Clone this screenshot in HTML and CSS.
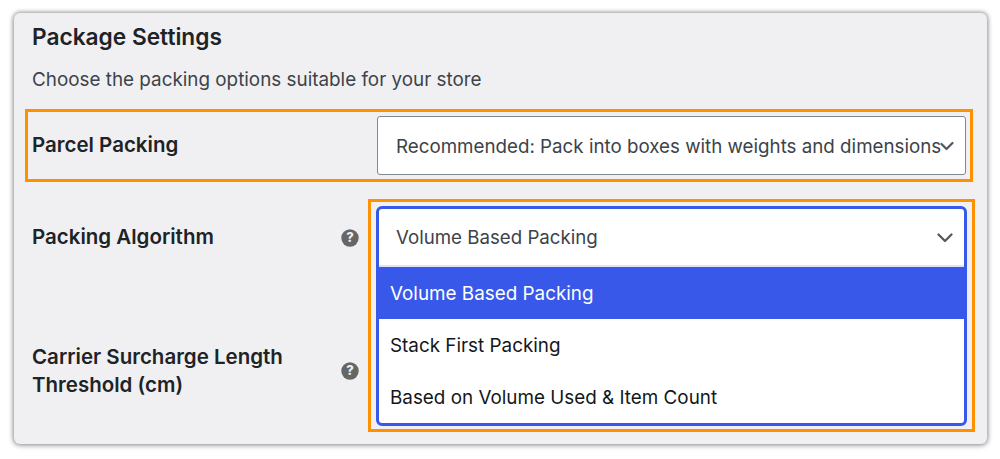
FILE: index.html
```html
<!DOCTYPE html>
<html lang="en">
<head>
<meta charset="utf-8">
<title>Package Settings</title>
<link rel="stylesheet" href="styles.css">
</head>
<body>
<main class="card">
  <h2 class="title">Package Settings</h2>
  <p class="intro">Choose the packing options suitable for your store</p>
  <section class="highlight parcel">
    <div class="label parcel-label">Parcel Packing</div>
    <div class="select">
      <span class="select-text">Recommended: Pack into boxes with weights and dimensions</span>
      <svg class="chev chev-small" viewBox="0 0 14 10"><path d="M1.500 3 6.500 8l6-6"/></svg>
    </div>
  </section>
  <section class="lower">
    <div class="labels">
      <div class="field algo">
        <div class="label">Packing Algorithm</div>
        <svg class="help" viewBox="0 0 18 18"><circle cx="9" cy="9" r="8.700"/><text x="9" y="13.400" text-anchor="middle">?</text></svg>
      </div>
      <div class="field surcharge">
        <div class="label">Carrier Surcharge Length<br>Threshold (cm)</div>
        <svg class="help" viewBox="0 0 18 18"><circle cx="9" cy="9" r="8.700"/><text x="9" y="13.400" text-anchor="middle">?</text></svg>
      </div>
    </div>
    <div class="highlight dropdown-wrap">
      <div class="dropdown">
        <div class="dropdown-head">
          <span>Volume Based Packing</span>
          <svg class="chev chev-large" viewBox="0 0 16 10"><path d="M1.500 1.500 8 8l6.500-6.500"/></svg>
        </div>
        <div class="option selected">Volume Based Packing</div>
        <div class="option">Stack First Packing</div>
        <div class="option">Based on Volume Used &amp; Item Count</div>
      </div>
    </div>
  </section>
</main>
</body>
</html>
```
FILE: styles.css
```css
* { box-sizing: border-box; }
html, body { height: 100%; }
body {
  margin: 0;
  padding: 13px 13px 15px 14px;
  background: #fff;
  font-family: Inter, "Liberation Sans", sans-serif;
  overflow: hidden;
}
.card {
  height: 431px;
  background: #f0f0f2;
  border-radius: 6px;
  box-shadow: 0 0 4px 1px rgba(0,0,0,.38), 0 2px 7px rgba(0,0,0,.12);
  padding: 10px 11px 0 11px;
  display: flex;
  flex-direction: column;
}
.title {
  margin: 0 0 0 7px;
  font-size: 22.700px;
  line-height: 28px;
  font-weight: 600;
  color: #1d2327;
}
.intro {
  margin: 17px 0 0 7px;
  font-size: 18.850px;
  line-height: 24px;
  color: #3c434a;
}
.highlight { border: 3px solid #ff9000; }
.parcel {
  margin-top: 17px;
  height: 73px;
  width: 948px;
  display: flex;
  align-items: center;
  justify-content: space-between;
  padding: 0 4px 0 4px;
}
.label {
  font-size: 20.500px;
  line-height: 28px;
  font-weight: 600;
  color: #1d2327;
}
.parcel-label { padding-bottom: 2px; }
.select {
  position: relative;
  width: 589px;
  height: 59px;
  background: #fff;
  border: 1px solid #7e8993;
  border-radius: 3px;
  display: flex;
  align-items: center;
  padding: 2px 0 0 18px;
  font-size: 18.750px;
  color: #3c434a;
  white-space: nowrap;
}
.chev { fill: none; stroke: #50575e; stroke-width: 2.200; stroke-linecap: round; stroke-linejoin: round; }
.chev-small { position: absolute; right: 11px; top: 24px; width: 14px; height: 10px; }
.lower {
  margin-top: 17px;
  display: flex;
  align-items: flex-start;
}
.labels { width: 343px; padding-left: 7px; }
.field {
  display: flex;
  align-items: center;
  justify-content: space-between;
  padding-right: 9px;
}
.algo { margin-top: 24px; }
.algo .help { margin-top: 2px; }
.surcharge { margin-top: 92px; }
.help { width: 18px; height: 18px; flex: none; }
.help circle { fill: #666; }
.help text { fill: #f0f0f2; font-size: 13px; font-weight: 800; font-family: Inter, sans-serif; }
.dropdown-wrap {
  width: 607px;
  height: 233px;
  padding: 4px 5px 3px 5px;
}
.dropdown {
  height: 220px;
  background: #fff;
  border: 3px solid #3858e9;
  border-radius: 6px;
  overflow: hidden;
  font-size: 18.850px;
}
.dropdown-head {
  height: 58px;
  display: flex;
  align-items: center;
  justify-content: space-between;
  padding: 0 11px 0 17px;
  font-size: 18.700px;
  color: #3c434a;
  border-bottom: 2px solid #e0e3f5;
}
.chev-large { width: 16px; height: 10px; margin-top: 2px; }
.option {
  height: 52px;
  display: flex;
  align-items: center;
  padding-left: 11px;
  color: #14171a;
}
.selected { background: #3858e9; color: #fff; }
```
